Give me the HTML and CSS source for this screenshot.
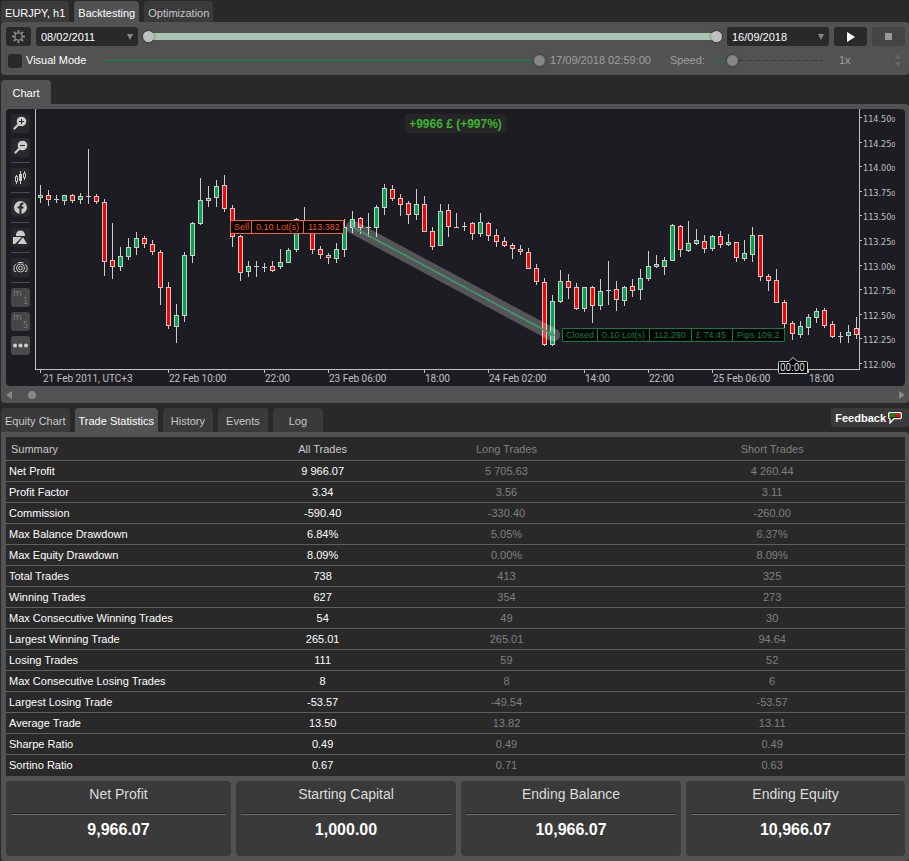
FILE: index.html
```html
<!DOCTYPE html>
<html lang="en">
  <head>
    <meta charset="UTF-8" />
    <meta name="viewport" content="width=device-width, initial-scale=1.0" />
    <title>Backtesting - EURJPY, h1</title>
    <link rel="stylesheet" href="styles.css">
  </head>
  <body>
    <nav class="tabs tabs-top">
      <button class="tab tab-symbol">EURJPY, h1</button>
      <button class="tab active">Backtesting</button>
      <button class="tab">Optimization</button>
    </nav>

    <section class="panel settings">
      <div class="row">
        <button class="btn btn-gear" aria-label="Settings">
          <svg width="15" height="15" viewBox="0 0 15 15">
            <circle cx="7.5" cy="7.5" r="3.6" fill="none" stroke="#888" stroke-width="1.4" />
            <path d="M7.5 1v3M7.5 11v3M1 7.5h3M11 7.5h3M2.9 2.9l2.1 2.1M10 10l2.1 2.1M2.9 12.1l2.1-2.1M10 5l2.1-2.1" stroke="#888" stroke-width="1.8" />
          </svg>
        </button>
        <div class="date">
          <select aria-label="Start date"><option>08/02/2011</option></select>
        </div>
        <div class="range">
          <input type="range" aria-label="Range start" min="0" max="100" value="0" />
          <input type="range" aria-label="Range end" min="0" max="100" value="100" />
        </div>
        <div class="date">
          <select aria-label="End date"><option>16/09/2018</option></select>
        </div>
        <button class="btn btn-run" aria-label="Start">
          <svg width="8" height="10" viewBox="0 0 8 10"><path d="M0 0l8 5-8 5z" fill="#fff" /></svg>
        </button>
        <button class="btn btn-run btn-stop" aria-label="Stop">
          <svg width="7" height="7" viewBox="0 0 7 7"><path d="M0 0h7v7H0z" fill="#999" /></svg>
        </button>
      </div>
      <div class="row row-visual">
        <input type="checkbox" id="visual" />
        <label class="visual-label" for="visual">Visual Mode</label>
        <input class="progress" type="range" aria-label="Progress" min="0" max="100" value="100" />
        <span class="time">17/09/2018 02:59:00</span>
        <label class="speed-label" for="speed">Speed:</label>
        <input class="speed" type="range" id="speed" min="0" max="100" value="12" />
        <input class="speed-value" type="text" aria-label="Speed value" value="1x" />
        <svg class="spin" width="6" height="13" viewBox="0 0 6 13">
          <path d="M3 0l3 5H0zM3 13l3-5H0z" fill="#666" />
        </svg>
      </div>
    </section>

    <nav class="tabs tabs-chart">
      <button class="tab active">Chart</button>
    </nav>

    <section class="panel chart-panel">
      <div class="chart">
        <div class="tools">
          <button class="tool" aria-label="Zoom in">
            <svg viewBox="0 0 19 19">
              <path d="M3.5 14.5l4-4" stroke="#ccc" stroke-width="2.2" stroke-linecap="round" />
              <circle cx="10.5" cy="7.5" r="4.8" fill="#ccc" />
              <path d="M8 7.5h5M10.5 5v5" stroke="#292929" />
            </svg>
          </button>
          <button class="tool" aria-label="Zoom out">
            <svg viewBox="0 0 19 19">
              <path d="M4.5 14.5l4-4" stroke="#ccc" stroke-width="2.2" stroke-linecap="round" />
              <circle cx="11.5" cy="7.5" r="4.8" fill="#ccc" />
              <path d="M9 7.5h5" stroke="#292929" />
            </svg>
          </button>
          <hr />
          <button class="tool" aria-label="Chart type">
            <svg viewBox="0 0 19 19" fill="none" stroke="#ccc">
              <path d="M5.5 7v2M5.5 14v2M9.5 3v13M13.5 3v2M13.5 10v2" />
              <path d="M4.5 8.5h2v5h-2zM12.5 5.5h2v4h-2z" />
              <path d="M8 6h3v7H8z" fill="#ccc" stroke="none" />
            </svg>
          </button>
          <hr />
          <button class="tool" aria-label="Indicators">
            <svg viewBox="0 0 19 19">
              <circle cx="9.5" cy="9.5" r="6.5" fill="#ccc" />
              <path d="M12.5 5.5h-1Q9.5 5.5 9.5 8v8M6.5 9.5h6" fill="none" stroke="#292929" stroke-width="2" />
            </svg>
          </button>
          <hr />
          <button class="tool" aria-label="Shapes">
            <svg viewBox="0 0 19 19" fill="#ccc">
              <path d="M5 7a4.5 4.5 0 0 1 9 0v1H5zM2 9h9l-7 7H2zM12 9l4 7H6.5z" />
              <path d="M5 16.5L12 8.5" stroke="#292929" />
            </svg>
          </button>
          <hr />
          <button class="tool" aria-label="Screenshot">
            <svg viewBox="0 0 19 19" fill="none" stroke="#ccc">
              <path d="M5 13.5H4Q3 13.5 3 12V9Q3 7 5 6.5M14 13.5h1Q16 13.5 16 12V9q0-2-2-2.5M6.5 5.5Q7 4.5 8 4.5h3q1 0 1.5 1" />
              <circle cx="9.5" cy="10" r="4" />
              <circle cx="9.5" cy="10" r="1.8" />
            </svg>
          </button>
          <hr />
          <button class="tool tool-period"><span>m</span><sub>1</sub></button>
          <button class="tool tool-period"><span>m</span><sub>5</sub></button>
          <button class="tool tool-more" aria-label="More">
            <svg viewBox="0 0 19 19" fill="#ccc">
              <circle cx="4" cy="9.5" r="2" /><circle cx="9.5" cy="9.5" r="2" /><circle cx="15" cy="9.5" r="2" />
            </svg>
          </button>
        </div>
        <svg class="plot" viewBox="0 0 870 277">
          <g id="candles"></g>
          <path class="axis" d="M.5 0v260.5H824.5V0" />
          <g id="axes"></g>
          <g class="trade">
            <path class="trade-band" d="M317.5 118L518.5 226" />
            <path class="trade-line" d="M317.5 118L518.5 226M513 226h6l-3-4" />
          </g>
          <g class="label sell">
            <path d="M195.5 111.5h113v13h-113zM216.5 111.5v13M268.5 111.5v13" />
            <text x="199" y="121">Sell</text>
            <text x="221" y="121">0.10 Lot(s)</text>
            <text x="273" y="121">113.382</text>
          </g>
          <g class="label closed">
            <path d="M527.5 219.5h222v13h-222zM562.5 219.5v13M614.5 219.5v13M656.5 219.5v13M697.5 219.5v13" />
            <text x="531" y="229">Closed</text>
            <text x="567" y="229">0.10 Lot(s)</text>
            <text x="619" y="229">112.290</text>
            <text x="661" y="229">£ 74.45</text>
            <text x="702" y="229">Pips 109.2</text>
          </g>
          <g class="marker">
            <path d="M744.5 252.5h9l4.5-4 4.5 4h9q1 0 1 1v10q0 1-1 1h-27q-1 0-1-1v-10q0-1 1-1z" />
            <text x="745" y="262">00:00</text>
          </g>
        </svg>
        <div class="profit">+9966 £ (+997%)</div>
      </div>
      <div class="scroll">
        <svg width="6" height="8" viewBox="0 0 6 8"><path d="M6 0v8L0 4z" fill="#888" /></svg>
        <span class="scroll-thumb"></span>
        <svg class="scroll-right" width="6" height="8" viewBox="0 0 6 8"><path d="M0 0v8l6-4z" fill="#888" /></svg>
      </div>
    </section>

    <nav class="tabs tabs-stats">
      <button class="tab">Equity Chart</button>
      <button class="tab active">Trade Statistics</button>
      <button class="tab">History</button>
      <button class="tab">Events</button>
      <button class="tab">Log</button>
      <button class="feedback">
        Feedback
        <svg width="14" height="12" viewBox="0 0 14 12">
          <path d="M2 .7h10q1.300 0 1.300 1.300v3.300q0 1.300-1.300 1.300H6L2 11V7Q.7 6.600.7 5.300V2Q.7.7 2 .7z" fill="#292929" stroke="#fff" stroke-width="1.3" />
          <path d="M2 2h5.500v3H2z" fill="#008a00" />
          <path d="M7.500 2H12v3H7.500z" fill="#f00" />
        </svg>
      </button>
    </nav>

    <section class="panel stats">
      <table>
        <colgroup>
          <col class="col-name" />
          <col class="col-all" />
          <col class="col-side" />
          <col class="col-side" />
        </colgroup>
        <thead>
          <tr><th>Summary</th><th>All Trades</th><th>Long Trades</th><th>Short Trades</th></tr>
        </thead>
        <tbody>
          <tr><td>Net Profit</td><td>9 966.07</td><td>5 705.63</td><td>4 260.44</td></tr>
          <tr><td>Profit Factor</td><td>3.34</td><td>3.56</td><td>3.11</td></tr>
          <tr><td>Commission</td><td>-590.40</td><td>-330.40</td><td>-260.00</td></tr>
          <tr><td>Max Balance Drawdown</td><td>6.84%</td><td>5.05%</td><td>6.37%</td></tr>
          <tr><td>Max Equity Drawdown</td><td>8.09%</td><td>0.00%</td><td>8.09%</td></tr>
          <tr><td>Total Trades</td><td>738</td><td>413</td><td>325</td></tr>
          <tr><td>Winning Trades</td><td>627</td><td>354</td><td>273</td></tr>
          <tr><td>Max Consecutive Winning Trades</td><td>54</td><td>49</td><td>30</td></tr>
          <tr><td>Largest Winning Trade</td><td>265.01</td><td>265.01</td><td>94.64</td></tr>
          <tr><td>Losing Trades</td><td>111</td><td>59</td><td>52</td></tr>
          <tr><td>Max Consecutive Losing Trades</td><td>8</td><td>8</td><td>6</td></tr>
          <tr><td>Largest Losing Trade</td><td>-53.57</td><td>-49.54</td><td>-53.57</td></tr>
          <tr><td>Average Trade</td><td>13.50</td><td>13.82</td><td>13.11</td></tr>
          <tr><td>Sharpe Ratio</td><td>0.49</td><td>0.49</td><td>0.49</td></tr>
          <tr><td>Sortino Ratio</td><td>0.67</td><td>0.71</td><td>0.63</td></tr>
        </tbody>
      </table>
      <div class="cards">
        <div class="card"><h2>Net Profit</h2><p>9,966.07</p></div>
        <div class="card"><h2>Starting Capital</h2><p>1,000.00</p></div>
        <div class="card"><h2>Ending Balance</h2><p>10,966.07</p></div>
        <div class="card"><h2>Ending Equity</h2><p>10,966.07</p></div>
      </div>
    </section>
    <script src="chart.js"></script>
  </body>
</html>
```

FILE: styles.css
```css
* {
  box-sizing: border-box;
}

:root {
  --bg: #292929;
  --panel: #525252;
  --raised: #3a3a3a;
  --plot: #1d1c22;
  --text: #fff;
  --muted: #c8c8c8;
  --dim: #808080;
}

body {
  margin: 0;
  padding: 1px 0 0 1px;
  background: var(--bg);
  color: var(--text);
  font: 11px/14px "Liberation Sans", Arial, sans-serif;
}

button,
input,
select {
  font: inherit;
  color: inherit;
  margin: 0;
  padding: 0;
  border: 0;
  background: none;
}

svg {
  display: block;
}

.tabs {
  display: flex;
  gap: 5px;
}

.tab {
  height: 24px;
  min-width: 50px;
  padding: 2px 4px 0;
  border-radius: 4px 4px 0 0;
  background: var(--raised);
  color: var(--muted);
  white-space: nowrap;
}

.tab.active {
  background: var(--panel);
  color: var(--text);
}

.tabs-top .tab {
  height: 21px;
}

.tabs-top .tab-symbol {
  color: var(--text);
}

.tabs-chart,
.tabs-stats {
  margin-top: 5px;
}

.panel {
  background: var(--panel);
  border-radius: 4px;
}

/* settings */

.settings {
  height: 53px;
  padding: 5px 4px 0 5px;
}

.row {
  display: flex;
  align-items: center;
  gap: 5px;
  height: 19px;
}

.row-visual {
  gap: 4px;
  margin-top: 5px;
  padding-left: 2px;
  color: #a0a0a0;
  line-height: 15px;
}

.btn {
  display: grid;
  place-items: center;
  height: 19px;
  border-radius: 3px;
  background: var(--bg);
}

.btn-gear {
  width: 25px;
}

.btn-run {
  width: 33px;
}

.btn-stop {
  background: #444;
}

.date {
  position: relative;
  width: 102px;
}

.date::after {
  content: "";
  position: absolute;
  right: 5px;
  top: 7px;
  border: 3px solid transparent;
  border-top: 6px solid #888;
  border-bottom: 0;
}

.date select {
  display: block;
  width: 100%;
  height: 19px;
  padding-left: 5px;
  border-radius: 3px;
  background: var(--bg);
  appearance: none;
}

input[type="range"] {
  appearance: none;
  height: 11px;
  min-width: 0;
}

input[type="range"]::-webkit-slider-thumb {
  appearance: none;
  width: 11px;
  height: 11px;
  border-radius: 50%;
  background: #bfbfbf;
  box-shadow: 0 0 3px rgba(0, 0, 0, 0.5);
}

.range {
  position: relative;
  flex: 1;
  height: 11px;
  background: linear-gradient(#a9c6b4, #a9c6b4) center / calc(100% - 11px) 7px no-repeat;
}

.range input {
  position: absolute;
  inset: 0;
  width: 100%;
  pointer-events: none;
}

.range input::-webkit-slider-thumb {
  pointer-events: auto;
}

.row-visual input[type="checkbox"] {
  appearance: none;
  width: 14px;
  height: 14px;
  border-radius: 3px;
  background: var(--bg);
}

.visual-label {
  width: 74px;
  color: var(--text);
}

.row-visual input[type="range"]::-webkit-slider-thumb {
  background: #858585;
}

.progress {
  flex: 1;
  background: linear-gradient(#078a45, #078a45) center / 100% 1px no-repeat;
}

.time {
  width: 117px;
  padding-left: 1px;
}

.speed-label {
  width: 41px;
}

.speed {
  width: 108px;
  background:
    linear-gradient(#3b6b4c, #3b6b4c) left center / 12px 1px no-repeat,
    repeating-linear-gradient(90deg, #3a3a3a 0 6px, transparent 6px 8px) center / 100% 1px no-repeat;
}

.speed-value {
  width: 64px;
  padding-left: 12px;
}

.spin {
  margin-right: 4px;
}

/* chart */

.chart-panel {
  padding: 5px 4px 0 5px;
  border-top-left-radius: 0;
}

.chart {
  position: relative;
  display: flex;
  border-radius: 4px;
  background: var(--plot);
}

.tools {
  display: flex;
  flex-direction: column;
  gap: 5px;
  width: 29px;
  padding: 5px;
}

.tools hr {
  width: 19px;
  height: 1px;
  margin: 0;
  border: 0;
  background: #4a4a4e;
}

.tool {
  width: 19px;
  height: 19px;
  border-radius: 3px;
  background: #29292a;
}

.tool-period {
  display: flex;
  align-items: flex-start;
  justify-content: space-between;
  padding: 0 2px;
  background: #464646;
  color: #787878;
  font: 9px/10px "DejaVu Sans", sans-serif;
}

.tool-period sub {
  align-self: flex-end;
  font-size: 8px;
}

.tool-more {
  background: #4a4a4a;
}

.plot {
  flex: 1;
  min-width: 0;
  font-size: 10px;
  font-family: Roboto, "Noto Sans", sans-serif;
}

.plot text {
  fill: #c0c0c0;
}

.plot .price {
  font-size: 9px;
  font-family: "DejaVu Sans Condensed", "DejaVu Sans", sans-serif;
  font-stretch: condensed;
}

.plot .pip {
  font-size: 7px;
}

#candles,
.axis,
.tick {
  shape-rendering: crispEdges;
}

.axis,
.tick {
  fill: none;
  stroke: #c0c0c0;
}

.wick {
  stroke: #ccc;
}

.candle {
  stroke: #ccc;
  fill: #00a550;
}

.candle.down {
  fill: #f00;
}

.trade-band {
  stroke: #fff;
  stroke-opacity: 0.25;
  stroke-width: 13;
  stroke-linecap: round;
}

.trade-line {
  fill: none;
  stroke: #3ca06a;
  stroke-width: 1.5;
}

.plot .label text {
  font-family: "Liberation Sans", Arial, sans-serif;
  font-size: 9px;
}

.label path {
  fill: #000;
}

.sell path {
  stroke: #ff5a1f;
}

.plot .sell text {
  fill: #f0561f;
}

.closed path {
  stroke: #078040;
}

.plot .closed text {
  fill: #078040;
}

.marker path {
  fill: #000;
  stroke: #ccc;
}

.plot .marker text {
  fill: #ddd;
}

.profit {
  position: absolute;
  top: 5px;
  left: 50%;
  transform: translateX(-50%);
  height: 19px;
  padding: 0 5px;
  border-radius: 3px;
  background: #262628;
  color: #3cb32e;
  font-size: 12px;
  font-weight: bold;
  line-height: 20px;
  white-space: nowrap;
}

.scroll {
  display: flex;
  align-items: center;
  height: 17px;
}

.scroll-thumb {
  width: 8px;
  height: 8px;
  margin-left: 16px;
  border-radius: 50%;
  background: #888;
}

.scroll-right {
  margin-left: auto;
}

/* statistics */

.feedback {
  display: flex;
  align-items: center;
  gap: 2px;
  height: 19px;
  margin-left: auto;
  padding: 0 7px 0 4px;
  border-radius: 3px;
  background: var(--raised);
  font-weight: bold;
}

.stats {
  padding: 5px 4px 5px 5px;
  border-top-left-radius: 0;
}

table {
  width: 100%;
  table-layout: fixed;
  border-spacing: 0;
  background: var(--bg);
}

.col-name,
.col-side {
  width: 30%;
}

.col-all {
  width: 102px;
}

th,
td {
  height: 21px;
  padding: 0;
  border-bottom: 1px solid #5e5e5e;
  color: var(--dim);
  text-align: center;
}

th {
  height: 24px;
  font-weight: normal;
}

th:first-child {
  padding-left: 5px;
  text-align: left;
}

td:first-child {
  padding-left: 3px;
  text-align: left;
}

th:nth-child(-n + 2) {
  color: var(--muted);
}

td:nth-child(-n + 2) {
  color: var(--text);
}

tbody tr:last-child td {
  border-bottom-color: var(--bg);
}

.cards {
  display: grid;
  grid-template-columns: 225fr 220fr 220fr 219fr;
  gap: 5px;
  margin-top: 5px;
}

.card {
  height: 75px;
  padding: 5px;
  border-radius: 4px;
  background: var(--raised);
  text-align: center;
}

.card h2 {
  margin: 0;
  padding-bottom: 11px;
  border-bottom: 1px solid #222;
  box-shadow: 0 1px #6c6c6c;
  color: #dcdcdc;
  font-size: 14px;
  font-weight: normal;
  line-height: 16px;
}

.card p {
  margin: 6px 0 0;
  font-size: 16px;
  font-weight: bold;
  line-height: 20px;
}
```

FILE: chart.js
```js
// high, body top, body bottom, low, direction (g = up, r = down, x = doji)
const candles = [
  [76, 86, 89, 94, 'g'], [81, 86, 91, 97, 'r'], [86, 90, 90, 94, 'x'], [86, 86, 92, 96, 'g'],
  [85, 86, 92, 94, 'r'], [84, 87, 91, 95, 'g'], [40, 87, 87, 95, 'x'], [85, 87, 93, 95, 'r'],
  [90, 93, 153, 167, 'r'], [114, 151, 158, 170, 'r'], [138, 147, 158, 162, 'g'], [129, 138, 148, 151, 'g'],
  [123, 129, 139, 146, 'g'], [127, 129, 135, 139, 'r'], [131, 135, 143, 146, 'r'], [141, 143, 179, 196, 'r'],
  [173, 178, 217, 220, 'r'], [195, 206, 218, 234, 'g'], [143, 146, 207, 213, 'g'], [113, 114, 147, 154, 'g'],
  [69, 91, 115, 116, 'g'], [77, 89, 92, 98, 'g'], [71, 77, 89, 98, 'g'], [66, 76, 100, 103, 'r'],
  [96, 99, 128, 138, 'r'], [126, 127, 164, 172, 'r'], [152, 157, 163, 168, 'g'], [152, 157, 157, 168, 'x'],
  [154, 158, 158, 163, 'x'], [152, 157, 162, 163, 'r'], [140, 153, 158, 160, 'g'], [139, 141, 154, 154, 'g'],
  [109, 110, 141, 143, 'g'], [98, 115, 119, 122, 'r'], [114, 116, 141, 145, 'r'], [137, 140, 146, 150, 'r'],
  [144, 146, 149, 155, 'r'], [134, 140, 150, 154, 'g'], [110, 118, 141, 148, 'g'], [102, 110, 119, 124, 'g'],
  [108, 109, 119, 125, 'r'], [104, 118, 118, 128, 'x'], [96, 98, 119, 128, 'g'], [75, 79, 99, 106, 'g'],
  [76, 80, 90, 92, 'r'], [85, 89, 96, 107, 'r'], [92, 94, 106, 115, 'r'], [80, 95, 106, 111, 'g'],
  [87, 95, 123, 123, 'r'], [118, 122, 138, 141, 'r'], [95, 102, 137, 137, 'g'], [95, 101, 118, 128, 'r'],
  [104, 118, 118, 118, 'x'], [113, 117, 117, 122, 'x'], [113, 114, 125, 131, 'r'], [104, 113, 125, 128, 'g'],
  [113, 114, 127, 132, 'r'], [120, 126, 133, 138, 'r'], [128, 132, 137, 138, 'r'], [134, 136, 140, 150, 'r'],
  [136, 140, 143, 146, 'r'], [139, 143, 160, 160, 'r'], [155, 159, 173, 176, 'r'], [169, 173, 236, 237, 'r'],
  [186, 192, 236, 237, 'g'], [161, 172, 193, 194, 'g'], [165, 172, 179, 190, 'r'], [174, 178, 200, 201, 'r'],
  [178, 178, 200, 203, 'g'], [177, 178, 197, 214, 'r'], [170, 182, 197, 201, 'g'], [152, 181, 181, 196, 'x'],
  [172, 180, 191, 202, 'r'], [177, 178, 192, 197, 'g'], [170, 177, 182, 188, 'r'], [160, 169, 181, 191, 'g'],
  [142, 157, 170, 172, 'g'], [146, 155, 158, 159, 'g'], [148, 151, 158, 166, 'g'], [115, 116, 152, 152, 'g'],
  [116, 117, 141, 148, 'r'], [112, 134, 142, 143, 'g'], [120, 131, 135, 136, 'g'], [126, 132, 140, 144, 'r'],
  [126, 127, 140, 142, 'g'], [122, 127, 136, 139, 'r'], [125, 133, 136, 137, 'g'], [133, 133, 149, 153, 'r'],
  [131, 144, 150, 152, 'g'], [118, 126, 146, 153, 'g'], [126, 126, 168, 172, 'r'], [165, 167, 172, 182, 'r'],
  [160, 171, 194, 194, 'r'], [191, 193, 215, 219, 'r'], [212, 214, 225, 231, 'r'], [212, 217, 226, 229, 'g'],
  [205, 208, 219, 226, 'g'], [199, 202, 209, 214, 'g'], [199, 201, 217, 219, 'r'], [212, 215, 228, 229, 'r'],
  [223, 227, 227, 234, 'x'], [216, 223, 227, 234, 'g'], [208, 219, 226, 230, 'r']
];

const prices = [
  ['114.50', 8], ['114.25', 33], ['114.00', 57], ['113.75', 82], ['113.50', 106], ['113.25', 131],
  ['113.00', 156], ['112.75', 180], ['112.50', 205], ['112.25', 229], ['112.00', 254]
];

const times = [
  ['21 Feb 2011, UTC+3', 5], ['22 Feb 10:00', 133], ['22:00', 229], ['23 Feb 06:00', 293], ['18:00', 389],
  ['24 Feb 02:00', 453], ['14:00', 549], ['22:00', 613], ['25 Feb 06:00', 677], ['18:00', 773]
];

function drawCandle([high, top, bottom, low, dir], i) {
  const x = 5.5 + i * 8;
  const wick = `<path class="wick" d="M${x} ${high}V${low}"/>`;
  if (dir === 'x') {
    return wick + `<path class="wick" d="M${x - 2.5} ${top + 0.5}h5"/>`;
  }
  const cls = dir === 'r' ? 'candle down' : 'candle';
  return wick + `<rect class="${cls}" x="${x - 2}" y="${top + 0.5}" width="4" height="${bottom - top - 1}"/>`;
}

document.getElementById('candles').innerHTML = candles.map(drawCandle).join('');

document.getElementById('axes').innerHTML =
  prices
    .map(([text, y]) => `<path class="tick" d="M825 ${y + 0.5}h2"/><text class="price" x="828" y="${y + 5}">${text}<tspan class="pip">0</tspan></text>`)
    .join('') +
  times
    .map(([text, x], i) => `<path class="tick" d="M${x + 0.5} 261v3"/><text x="${x + (i ? 1 : 3)}" y="273">${text}</text>`)
    .join('');
```
